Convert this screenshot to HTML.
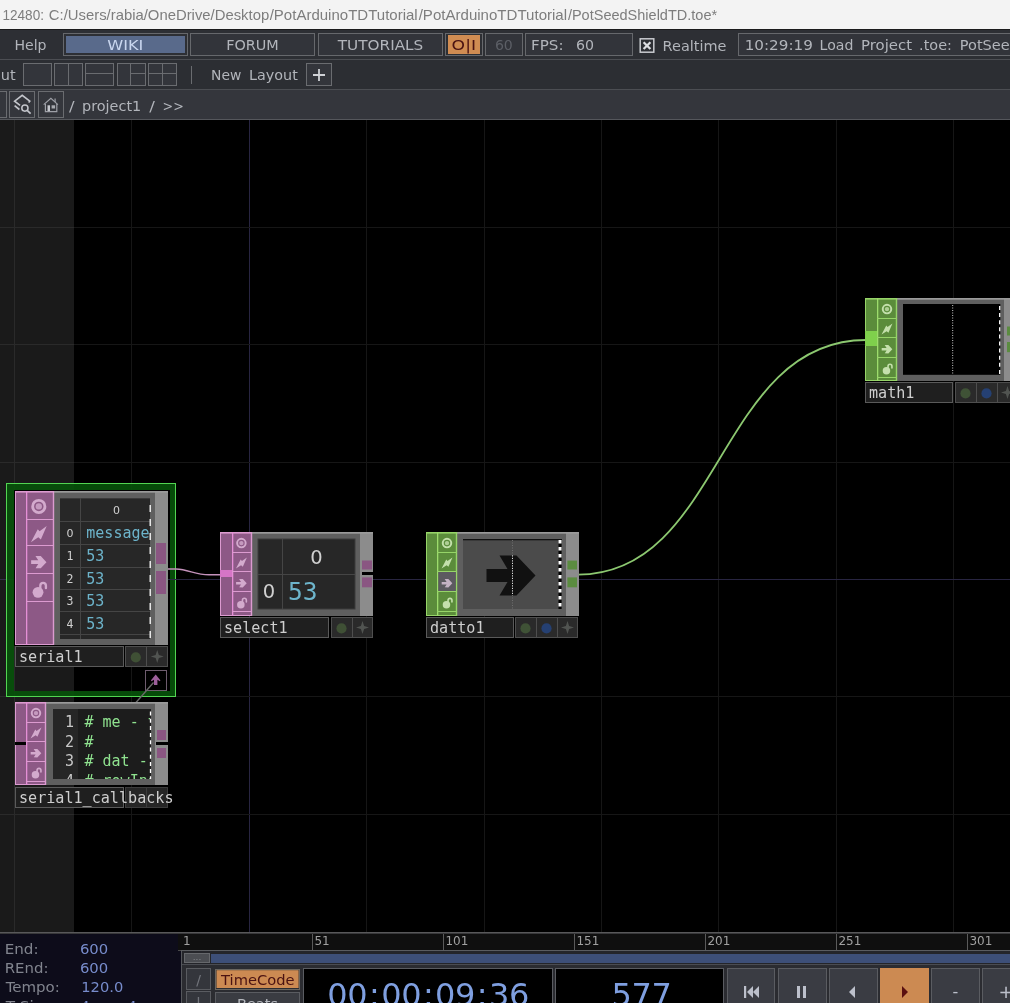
<!DOCTYPE html>
<html lang="en">
<head>
<meta charset="utf-8">
<title>TouchDesigner - PotSeedShieldTD.toe</title>
<style>
html,body{margin:0;padding:0;background:#000;overflow:hidden;}
svg{display:block;will-change:transform;}
text{white-space:pre;}
.u{font-family:"DejaVu Sans", "Liberation Sans", sans-serif;}
.m{font-family:"DejaVu Sans Mono", "Liberation Mono", monospace;}
.t{font-family:"Liberation Sans", sans-serif;}
</style>
</head>
<body>
<svg width="1010" height="1003" viewBox="0 0 1010 1003">
<rect x="0" y="120" width="1010" height="813" fill="#000" />
<rect x="0" y="120" width="74" height="812" fill="#1a1a1a" />
<line x1="14.5" y1="120" x2="14.5" y2="932" stroke="#2a2a2a" stroke-width="1" />
<line x1="131.5" y1="120" x2="131.5" y2="932" stroke="#161616" stroke-width="1" />
<line x1="249.5" y1="120" x2="249.5" y2="932" stroke="#282541" stroke-width="1" />
<line x1="366.5" y1="120" x2="366.5" y2="932" stroke="#161616" stroke-width="1" />
<line x1="484.5" y1="120" x2="484.5" y2="932" stroke="#161616" stroke-width="1" />
<line x1="601.5" y1="120" x2="601.5" y2="932" stroke="#161616" stroke-width="1" />
<line x1="718.5" y1="120" x2="718.5" y2="932" stroke="#161616" stroke-width="1" />
<line x1="836.5" y1="120" x2="836.5" y2="932" stroke="#161616" stroke-width="1" />
<line x1="953.5" y1="120" x2="953.5" y2="932" stroke="#161616" stroke-width="1" />
<line x1="74" y1="227.5" x2="1010" y2="227.5" stroke="#161616" stroke-width="1" />
<line x1="0" y1="227.5" x2="74" y2="227.5" stroke="#2a2a2a" stroke-width="1" />
<line x1="74" y1="344.5" x2="1010" y2="344.5" stroke="#161616" stroke-width="1" />
<line x1="0" y1="344.5" x2="74" y2="344.5" stroke="#2a2a2a" stroke-width="1" />
<line x1="74" y1="462.5" x2="1010" y2="462.5" stroke="#161616" stroke-width="1" />
<line x1="0" y1="462.5" x2="74" y2="462.5" stroke="#2a2a2a" stroke-width="1" />
<line x1="74" y1="579.5" x2="1010" y2="579.5" stroke="#282541" stroke-width="1" />
<line x1="0" y1="579.5" x2="74" y2="579.5" stroke="#33304a" stroke-width="1" />
<line x1="74" y1="696.5" x2="1010" y2="696.5" stroke="#161616" stroke-width="1" />
<line x1="0" y1="696.5" x2="74" y2="696.5" stroke="#2a2a2a" stroke-width="1" />
<line x1="74" y1="814.5" x2="1010" y2="814.5" stroke="#161616" stroke-width="1" />
<line x1="0" y1="814.5" x2="74" y2="814.5" stroke="#2a2a2a" stroke-width="1" />
<path fill-rule="evenodd" fill="#07530a" fill-opacity="0.9" d="M6 483 H176 V697 H6 Z M14 490 H170 V691 H14 Z"/>
<rect x="6.5" y="483.5" width="169" height="213" fill="none" stroke="#52d552" stroke-width="1" />
<rect x="14" y="490" width="156" height="156" fill="#000" />
<line x1="168" y1="579.5" x2="176" y2="579.5" stroke="#2c2a45" stroke-width="1" />
<path d="M167 569 H176 C189 569.6 195 574.8 209 574.8 H220" fill="none" stroke="#c592bc" stroke-width="1.45"/>
<path d="M578 574.6 C722 574.6 718 340 866 340" fill="none" stroke="#8cc870" stroke-width="1.8"/>
<rect x="15" y="491" width="153" height="154" fill="#5f5f5f" />
<rect x="155" y="491" width="13" height="154" fill="#8c8c8c" />
<rect x="54" y="491" width="114" height="1.7" fill="#9a9a9a" />
<rect x="15" y="491" width="39" height="154" fill="#8d5986" />
<rect x="15" y="491" width="1" height="154" fill="#dc9bd0" />
<rect x="15" y="491" width="39" height="1.6" fill="#dc9bd0" />
<rect x="15" y="644" width="39" height="1" fill="#dc9bd0" />
<rect x="26" y="491" width="1.3" height="154" fill="#e58fd6" />
<rect x="52.8" y="491" width="1.4" height="154" fill="#dc9bd0" />
<rect x="26" y="519" width="27" height="1" fill="#dc9bd0" />
<rect x="26" y="545" width="27" height="1" fill="#dc9bd0" />
<rect x="26" y="573" width="27" height="1" fill="#dc9bd0" />
<rect x="26" y="601" width="27" height="1" fill="#dc9bd0" />
<circle cx="38.8" cy="506.429" r="6.14" fill="none" stroke="#d3aacd" stroke-width="2.81"/>
<circle cx="38.8" cy="506.429" r="3.15" fill="#d3aacd" fill-opacity="0.8"/>
<polygon points="30.92,542.17 37.77,529.20 39.58,531.30 46.70,526.01 40.84,539.39 38.32,537.16" fill="#d3aacd" />
<polygon points="31.13,560.28 38.25,560.28 35.44,556.11 40.76,556.00 46.47,562.21 40.76,568.26 35.58,568.17 38.25,564.07 31.13,564.07" fill="#d3aacd" />
<circle cx="38.01" cy="592.34" r="5.41" fill="#d3aacd"/>
<path d="M40.31 588.05 V585.59 A2.81 2.81 0 0 1 45.92 585.59 V588.19" fill="none" stroke="#d3aacd" stroke-width="2.33" stroke-linecap="round"/>
<rect x="156" y="543" width="10" height="21" fill="#8a5682" />
<rect x="156" y="571" width="10" height="23" fill="#8a5682" />
<rect x="60" y="498" width="90" height="141" fill="#272727" />
<rect x="60" y="498" width="90" height="1" fill="#3a3a3a" />
<rect x="60" y="521" width="90" height="1" fill="#454545" />
<rect x="60" y="544" width="90" height="1" fill="#454545" />
<rect x="60" y="567" width="90" height="1" fill="#454545" />
<rect x="60" y="589" width="90" height="1" fill="#454545" />
<rect x="60" y="611" width="90" height="1" fill="#454545" />
<rect x="60" y="634" width="90" height="1" fill="#454545" />
<rect x="80" y="498" width="1" height="141" fill="#454545" />
<text class="u" x="116.5" y="514" font-size="11" fill="#d0d0d0" text-anchor="middle" >0</text>
<clipPath id="c1"><rect x="60" y="498" width="89.5" height="141"/></clipPath>
<g clip-path="url(#c1)">
<text class="u" x="70" y="536.8" font-size="11" fill="#d0d0d0" text-anchor="middle" >0</text>
<text class="m" x="86.3" y="537.8" font-size="15" fill="#6db4cb" text-anchor="start" >message</text>
<text class="m" x="70" y="560" font-size="11.5" fill="#d0d0d0" text-anchor="middle" >1</text>
<text class="m" x="86.3" y="561" font-size="15" fill="#6db4cb" text-anchor="start" >53</text>
<text class="m" x="70" y="582.6" font-size="11.5" fill="#d0d0d0" text-anchor="middle" >2</text>
<text class="m" x="86.3" y="583.6" font-size="15" fill="#6db4cb" text-anchor="start" >53</text>
<text class="m" x="70" y="605" font-size="11.5" fill="#d0d0d0" text-anchor="middle" >3</text>
<text class="m" x="86.3" y="606" font-size="15" fill="#6db4cb" text-anchor="start" >53</text>
<text class="m" x="70" y="627.6" font-size="11.5" fill="#d0d0d0" text-anchor="middle" >4</text>
<text class="m" x="86.3" y="628.6" font-size="15" fill="#6db4cb" text-anchor="start" >53</text>
</g>
<line x1="150.2" y1="505" x2="150.2" y2="639" stroke="#fff" stroke-width="1.3" stroke-dasharray="7 7" stroke-dashoffset="0"/>
<rect x="15.5" y="646.5" width="108" height="20" fill="#1f1f1f" stroke="#5a5a5a" stroke-width="1" />
<rect x="125.5" y="646.5" width="42" height="20" fill="#2a2a2a" stroke="#4e4e4e" stroke-width="1" />
<rect x="146" y="646" width="1" height="21" fill="#4e4e4e" />
<circle cx="135.8" cy="657.4" r="5.1" fill="#3f5035"/>
<polygon points="157.25,650.00 158.85,654.90 163.75,656.50 158.85,658.10 157.25,663.00 155.65,658.10 150.75,656.50 155.65,654.90" fill="#515451" />
<text class="m" x="19" y="662" font-size="15.1" fill="#cecece" text-anchor="start" >serial1</text>
<rect x="145.5" y="670.5" width="21" height="20" fill="#000" stroke="#6e5c6e" stroke-width="1" />
<polygon points="155.70,674.40 160.40,680.20 159.90,681.20 157.40,679.80 157.40,685.00 154.00,685.00 154.00,679.80 151.50,681.20 151.00,680.20" fill="#9d5f9b" />
<path d="M153.5 682.5 L136 702.5" fill="none" stroke="#6a6a6a" stroke-width="1.3"/>
<rect x="15" y="702" width="153" height="83" fill="#5f5f5f" />
<rect x="155" y="702" width="13" height="83" fill="#8c8c8c" />
<rect x="46" y="702" width="122" height="1.7" fill="#9a9a9a" />
<rect x="15" y="702" width="31" height="83" fill="#8d5986" />
<rect x="15" y="702" width="1" height="83" fill="#dc9bd0" />
<rect x="15" y="702" width="31" height="1.6" fill="#dc9bd0" />
<rect x="15" y="784" width="31" height="1" fill="#dc9bd0" />
<rect x="26" y="702" width="1.3" height="83" fill="#e58fd6" />
<rect x="44.8" y="702" width="1.4" height="83" fill="#dc9bd0" />
<rect x="26" y="722" width="19" height="1" fill="#dc9bd0" />
<rect x="26" y="741" width="19" height="1" fill="#dc9bd0" />
<rect x="26" y="761" width="19" height="1" fill="#dc9bd0" />
<rect x="26" y="781" width="19" height="1" fill="#dc9bd0" />
<circle cx="36.0" cy="713.1" r="4.26" fill="none" stroke="#d3aacd" stroke-width="1.95"/>
<circle cx="36.0" cy="713.1" r="2.18" fill="#d3aacd" fill-opacity="0.8"/>
<polygon points="30.54,738.61 35.29,729.61 36.54,731.06 41.48,727.39 37.42,736.68 35.67,735.13" fill="#d3aacd" />
<polygon points="30.68,751.89 35.62,751.89 33.67,749.00 37.36,748.93 41.32,753.23 37.36,757.43 33.77,757.36 35.62,754.52 30.68,754.52" fill="#d3aacd" />
<circle cx="35.45" cy="774.85" r="3.75" fill="#d3aacd"/>
<path d="M37.05 771.88 V770.16 A1.95 1.95 0 0 1 40.94 770.16 V771.97" fill="none" stroke="#d3aacd" stroke-width="1.61" stroke-linecap="round"/>
<rect x="15" y="742" width="11" height="3" fill="#000" />
<rect x="156" y="742" width="12" height="3" fill="#000" />
<rect x="157" y="730" width="9" height="10" fill="#8a5682" />
<rect x="157" y="748" width="9" height="10" fill="#8a5682" />
<rect x="53" y="709" width="98" height="70" fill="#1c1c1c" />
<rect x="53" y="709" width="25" height="70" fill="#262626" />
<clipPath id="c2"><rect x="53" y="709" width="97" height="70"/></clipPath>
<g clip-path="url(#c2)">
<text class="m" x="74" y="727.2" font-size="15" fill="#c8c8c8" text-anchor="end" >1</text>
<text class="m" x="84.5" y="727.2" font-size="15" fill="#8fe28f" text-anchor="start" ># me - t</text>
<text class="m" x="74" y="746.7" font-size="15" fill="#c8c8c8" text-anchor="end" >2</text>
<text class="m" x="84.5" y="746.7" font-size="15" fill="#8fe28f" text-anchor="start" >#</text>
<text class="m" x="74" y="766" font-size="15" fill="#c8c8c8" text-anchor="end" >3</text>
<text class="m" x="84.5" y="766" font-size="15" fill="#8fe28f" text-anchor="start" ># dat - </text>
<text class="m" x="74" y="785.5" font-size="15" fill="#c8c8c8" text-anchor="end" >4</text>
<text class="m" x="84.5" y="785.5" font-size="15" fill="#8fe28f" text-anchor="start" ># rowInd</text>
</g>
<line x1="150.5" y1="711.5" x2="150.5" y2="779" stroke="#fff" stroke-width="1.3" stroke-dasharray="4 3.2" stroke-dashoffset="0"/>
<rect x="15.5" y="787.5" width="108" height="20" fill="#1f1f1f" stroke="#5a5a5a" stroke-width="1" />
<rect x="125.5" y="787.5" width="42" height="20" fill="#262626" stroke="#3c3c3c" stroke-width="1" />
<rect x="146" y="787" width="1" height="21" fill="#3c3c3c" />
<text class="m" x="19" y="803" font-size="15.1" fill="#cecece" text-anchor="start" >serial1_callbacks</text>
<rect x="220" y="532" width="153" height="84" fill="#5f5f5f" />
<rect x="360" y="532" width="13" height="84" fill="#8c8c8c" />
<rect x="252" y="532" width="121" height="1.7" fill="#9a9a9a" />
<rect x="220" y="532" width="32" height="84" fill="#8d5986" />
<rect x="220" y="532" width="1" height="84" fill="#dc9bd0" />
<rect x="220" y="532" width="32" height="1.6" fill="#dc9bd0" />
<rect x="220" y="615" width="32" height="1" fill="#dc9bd0" />
<rect x="232" y="532" width="1.3" height="84" fill="#e58fd6" />
<rect x="250.8" y="532" width="1.4" height="84" fill="#dc9bd0" />
<rect x="232" y="552" width="19" height="1" fill="#dc9bd0" />
<rect x="232" y="571" width="19" height="1" fill="#dc9bd0" />
<rect x="232" y="591" width="19" height="1" fill="#dc9bd0" />
<rect x="232" y="611" width="19" height="1" fill="#dc9bd0" />
<circle cx="241.4" cy="543.1" r="4.26" fill="none" stroke="#d3aacd" stroke-width="1.95"/>
<circle cx="241.4" cy="543.1" r="2.18" fill="#d3aacd" fill-opacity="0.8"/>
<polygon points="235.94,568.61 240.69,559.61 241.94,561.06 246.88,557.39 242.82,566.68 241.07,565.13" fill="#d3aacd" />
<polygon points="236.08,581.89 241.02,581.89 239.07,579.00 242.76,578.93 246.72,583.23 242.76,587.43 239.17,587.36 241.02,584.52 236.08,584.52" fill="#d3aacd" />
<circle cx="240.85" cy="604.85" r="3.75" fill="#d3aacd"/>
<path d="M242.44 601.88 V600.16 A1.95 1.95 0 0 1 246.34 600.16 V601.97" fill="none" stroke="#d3aacd" stroke-width="1.61" stroke-linecap="round"/>
<rect x="220" y="570" width="12" height="7" fill="#d675c6" />
<rect x="362" y="560.5" width="10" height="9.0" fill="#8a5682" />
<rect x="362" y="577.4" width="10" height="9.899999999999977" fill="#8a5682" />
<rect x="362" y="572" width="11" height="3" fill="#000" />
<rect x="258" y="539" width="97" height="70" fill="#272727" stroke="#3c3c3c" stroke-width="1" />
<rect x="282" y="539" width="1" height="70" fill="#454545" />
<rect x="258" y="574" width="97" height="1" fill="#454545" />
<text class="u" x="316.5" y="564" font-size="19.5" fill="#d0d0d0" text-anchor="middle" >0</text>
<text class="u" x="269" y="598" font-size="19.5" fill="#d0d0d0" text-anchor="middle" >0</text>
<text class="m" x="288" y="599.5" font-size="24.5" fill="#6db4cb" text-anchor="start" >53</text>
<rect x="220.5" y="617.5" width="108" height="20" fill="#1f1f1f" stroke="#5a5a5a" stroke-width="1" />
<rect x="331.5" y="617.5" width="41" height="20" fill="#2a2a2a" stroke="#4e4e4e" stroke-width="1" />
<rect x="352" y="617" width="1" height="21" fill="#4e4e4e" />
<circle cx="341.5" cy="628.4" r="5.1" fill="#3f5035"/>
<polygon points="362.50,621.00 364.10,625.90 369.00,627.50 364.10,629.10 362.50,634.00 360.90,629.10 356.00,627.50 360.90,625.90" fill="#515451" />
<text class="m" x="224" y="633" font-size="15.1" fill="#cecece" text-anchor="start" >select1</text>
<rect x="426" y="532" width="153" height="84" fill="#5f5f5f" />
<rect x="566" y="532" width="13" height="84" fill="#8c8c8c" />
<rect x="457" y="532" width="122" height="1.7" fill="#9a9a9a" />
<rect x="426" y="532" width="31" height="84" fill="#5b8c3b" />
<rect x="426" y="532" width="1" height="84" fill="#96d468" />
<rect x="426" y="532" width="31" height="1.6" fill="#96d468" />
<rect x="426" y="615" width="31" height="1" fill="#96d468" />
<rect x="437" y="532" width="1.3" height="84" fill="#9ddc6c" />
<rect x="455.8" y="532" width="1.4" height="84" fill="#96d468" />
<rect x="437" y="552" width="19" height="1" fill="#96d468" />
<rect x="437" y="571" width="19" height="1" fill="#96d468" />
<rect x="437" y="591" width="19" height="1" fill="#96d468" />
<rect x="437" y="611" width="19" height="1" fill="#96d468" />
<circle cx="447.0" cy="543.1" r="4.26" fill="none" stroke="#c4e0ac" stroke-width="1.95"/>
<circle cx="447.0" cy="543.1" r="2.18" fill="#c4e0ac" fill-opacity="0.8"/>
<polygon points="441.54,568.61 446.29,559.61 447.54,561.06 452.48,557.39 448.42,566.68 446.67,565.13" fill="#c4e0ac" />
<rect x="438.3" y="572" width="17.5" height="19" fill="#5c5a60" />
<polygon points="441.68,581.89 446.62,581.89 444.67,579.00 448.36,578.93 452.32,583.23 448.36,587.43 444.77,587.36 446.62,584.52 441.68,584.52" fill="#c4b2c4" />
<circle cx="446.45" cy="604.85" r="3.75" fill="#c4e0ac"/>
<path d="M448.05 601.88 V600.16 A1.95 1.95 0 0 1 451.94 600.16 V601.97" fill="none" stroke="#c4e0ac" stroke-width="1.61" stroke-linecap="round"/>
<rect x="567.4" y="560.6" width="9.6" height="8.899999999999977" fill="#5b8c40" />
<rect x="567.4" y="577.4" width="9.6" height="9.899999999999977" fill="#5b8c40" />
<rect x="463" y="539" width="99" height="70" fill="#4b4b4b" />
<rect x="463" y="539" width="99" height="1.3" fill="#111" />
<polygon points="486.50,569.00 507.50,569.00 499.50,555.50 516.50,555.50 535.50,575.50 516.50,595.50 499.50,595.50 507.50,582.00 486.50,582.00" fill="#111" />
<line x1="512.5" y1="540" x2="512.5" y2="609" stroke="#6e6e6e" stroke-width="1" stroke-dasharray="1 1.5" stroke-dashoffset="0"/>
<line x1="512.5" y1="555.5" x2="512.5" y2="595.5" stroke="#e0e0e0" stroke-width="1" stroke-dasharray="1 1.5" stroke-dashoffset="0"/>
<rect x="558.5" y="540" width="3" height="69" fill="#000" />
<line x1="560" y1="540" x2="560" y2="609" stroke="#fff" stroke-width="3" stroke-dasharray="3.5 3.5" stroke-dashoffset="0"/>
<rect x="426.5" y="617.5" width="87" height="20" fill="#1f1f1f" stroke="#5a5a5a" stroke-width="1" />
<rect x="515.5" y="617.5" width="62" height="20" fill="#2a2a2a" stroke="#4e4e4e" stroke-width="1" />
<rect x="536" y="617" width="1" height="21" fill="#4e4e4e" />
<rect x="557" y="617" width="1" height="21" fill="#4e4e4e" />
<circle cx="525.5" cy="628.4" r="5.1" fill="#3f5236"/>
<circle cx="546.5" cy="628.4" r="5.1" fill="#254072"/>
<polygon points="567.50,621.00 569.10,625.90 574.00,627.50 569.10,629.10 567.50,634.00 565.90,629.10 561.00,627.50 565.90,625.90" fill="#515451" />
<text class="m" x="430" y="633" font-size="15.1" fill="#cecece" text-anchor="start" >datto1</text>
<rect x="865" y="298" width="153" height="83" fill="#5f5f5f" />
<rect x="1004" y="298" width="14" height="83" fill="#8c8c8c" />
<rect x="897" y="298" width="121" height="1.7" fill="#9a9a9a" />
<rect x="865" y="298" width="32" height="83" fill="#5b8c3b" />
<rect x="865" y="298" width="1" height="83" fill="#96d468" />
<rect x="865" y="298" width="32" height="1.6" fill="#96d468" />
<rect x="865" y="380" width="32" height="1" fill="#96d468" />
<rect x="877" y="298" width="1.3" height="83" fill="#9ddc6c" />
<rect x="895.8" y="298" width="1.4" height="83" fill="#96d468" />
<rect x="877" y="318" width="19" height="1" fill="#96d468" />
<rect x="877" y="337" width="19" height="1" fill="#96d468" />
<rect x="877" y="357" width="19" height="1" fill="#96d468" />
<rect x="877" y="377" width="19" height="1" fill="#96d468" />
<circle cx="887.0" cy="309.1" r="4.26" fill="none" stroke="#c4e0ac" stroke-width="1.95"/>
<circle cx="887.0" cy="309.1" r="2.18" fill="#c4e0ac" fill-opacity="0.8"/>
<polygon points="881.54,334.61 886.29,325.61 887.54,327.06 892.48,323.39 888.42,332.68 886.67,331.13" fill="#c4e0ac" />
<polygon points="881.68,347.89 886.62,347.89 884.67,345.00 888.36,344.93 892.32,349.23 888.36,353.43 884.77,353.36 886.62,350.52 881.68,350.52" fill="#c4e0ac" />
<circle cx="886.45" cy="370.85" r="3.75" fill="#c4e0ac"/>
<path d="M888.04 367.88 V366.17 A1.95 1.95 0 0 1 891.94 366.17 V367.97" fill="none" stroke="#c4e0ac" stroke-width="1.61" stroke-linecap="round"/>
<rect x="865" y="331" width="12" height="15" fill="#7fd04c" />
<rect x="1007" y="326.5" width="10" height="9.0" fill="#5b8c40" />
<rect x="1007" y="342" width="10" height="10.199999999999989" fill="#5b8c40" />
<rect x="903" y="304" width="97.3" height="70.8" fill="#000" />
<line x1="952.7" y1="305" x2="952.7" y2="375" stroke="#ccc" stroke-width="1" stroke-dasharray="1 1.5" stroke-dashoffset="0"/>
<line x1="999.7" y1="306" x2="999.7" y2="375" stroke="#fff" stroke-width="1.3" stroke-dasharray="4 3.1" stroke-dashoffset="0"/>
<rect x="865.5" y="382.5" width="87" height="20" fill="#1f1f1f" stroke="#5a5a5a" stroke-width="1" />
<rect x="955.5" y="382.5" width="62" height="20" fill="#2a2a2a" stroke="#4e4e4e" stroke-width="1" />
<rect x="976" y="382" width="1" height="21" fill="#4e4e4e" />
<rect x="997" y="382" width="1" height="21" fill="#4e4e4e" />
<circle cx="965.5" cy="393.4" r="5.1" fill="#3f5236"/>
<circle cx="986.5" cy="393.4" r="5.1" fill="#254072"/>
<polygon points="1007.50,386.00 1009.10,390.90 1014.00,392.50 1009.10,394.10 1007.50,399.00 1005.90,394.10 1001.00,392.50 1005.90,390.90" fill="#515451" />
<text class="m" x="869" y="398" font-size="15.1" fill="#cecece" text-anchor="start" >math1</text>
<rect x="0" y="0" width="1010" height="29" fill="#f3f3f3" />
<text class="t" x="2.5" y="20.4" font-size="14.4" fill="#7d7d7d" text-anchor="start"  textLength="41.47" lengthAdjust="spacingAndGlyphs">12480:</text>
<text class="t" x="48.8" y="20.4" font-size="14.4" fill="#7d7d7d" text-anchor="start"  textLength="220.39" lengthAdjust="spacingAndGlyphs">C:/Users/rabia/OneDrive/Desktop</text>
<text class="t" x="269.7" y="20.4" font-size="14.4" fill="#7d7d7d" text-anchor="start"  textLength="148.00" lengthAdjust="spacingAndGlyphs">/PotArduinoTDTutorial</text>
<text class="t" x="418.7" y="20.4" font-size="14.4" fill="#7d7d7d" text-anchor="start"  textLength="148.40" lengthAdjust="spacingAndGlyphs">/PotArduinoTDTutorial</text>
<text class="t" x="567.9" y="20.4" font-size="14.4" fill="#7d7d7d" text-anchor="start"  textLength="149.23" lengthAdjust="spacingAndGlyphs">/PotSeedShieldTD.toe*</text>
<rect x="0" y="29" width="1010" height="31" fill="#2d2f34" />
<rect x="0" y="29" width="1010" height="1" fill="#1a1a1c" />
<text class="u" x="14.4" y="50" font-size="14.5" fill="#b2b5bb" text-anchor="start"  textLength="32.09" lengthAdjust="spacingAndGlyphs">Help</text>
<rect x="63.5" y="33.5" width="124" height="22" fill="#2d2f34" stroke="#66686c" stroke-width="1" />
<rect x="66" y="36" width="119" height="17" fill="#596a8b" />
<text class="u" x="107.2" y="50" font-size="14.5" fill="#c9d6ee" text-anchor="start"  textLength="36.13" lengthAdjust="spacingAndGlyphs">WIKI</text>
<rect x="190.5" y="33.5" width="124" height="22" fill="#32343a" stroke="#66686c" stroke-width="1" />
<text class="u" x="226.2" y="50" font-size="14.5" fill="#b2b5bb" text-anchor="start"  textLength="52.62" lengthAdjust="spacingAndGlyphs">FORUM</text>
<rect x="318.5" y="33.5" width="124" height="22" fill="#32343a" stroke="#66686c" stroke-width="1" />
<text class="u" x="337.77" y="50" font-size="14.5" fill="#b2b5bb" text-anchor="start"  textLength="85.51" lengthAdjust="spacingAndGlyphs">TUTORIALS</text>
<rect x="445.5" y="33.5" width="37" height="22" fill="#2d2f34" stroke="#66686c" stroke-width="1" />
<rect x="448" y="35" width="32" height="19" fill="#d08c52" />
<text class="u" x="451.6" y="50" font-size="14.5" fill="#4a1212" text-anchor="start"  textLength="24.42" lengthAdjust="spacingAndGlyphs">O|I</text>
<rect x="485.5" y="33.5" width="37" height="22" fill="#32343a" stroke="#66686c" stroke-width="1" />
<text class="u" x="494.9" y="50" font-size="14.5" fill="#5c5f66" text-anchor="start"  textLength="17.91" lengthAdjust="spacingAndGlyphs">60</text>
<rect x="525.5" y="33.5" width="107" height="22" fill="#32343a" stroke="#66686c" stroke-width="1" />
<text class="u" x="531.0" y="50" font-size="14.5" fill="#b2b5bb" text-anchor="start"  textLength="32.49" lengthAdjust="spacingAndGlyphs">FPS:</text>
<text class="u" x="575.9" y="50" font-size="14.5" fill="#b2b5bb" text-anchor="start"  textLength="18.01" lengthAdjust="spacingAndGlyphs">60</text>
<rect x="640.2" y="38.8" width="13.6" height="13.4" fill="none" stroke="#c8cacf" stroke-width="1.5" />
<path d="M643.6 42.2 L650.4 49 M650.4 42.2 L643.6 49" stroke="#dcdee2" stroke-width="2.3" fill="none"/>
<text class="u" x="662.6" y="51.2" font-size="14.5" fill="#b2b5bb" text-anchor="start"  textLength="63.82" lengthAdjust="spacingAndGlyphs">Realtime</text>
<rect x="738.5" y="33.5" width="299" height="22" fill="#32343a" stroke="#66686c" stroke-width="1" />
<text class="u" x="744.7" y="50" font-size="14.5" fill="#b2b5bb" text-anchor="start"  textLength="68.20" lengthAdjust="spacingAndGlyphs">10:29:19</text>
<text class="u" x="819.6" y="50" font-size="14.5" fill="#b2b5bb" text-anchor="start"  textLength="33.77" lengthAdjust="spacingAndGlyphs">Load</text>
<text class="u" x="861.0" y="50" font-size="14.5" fill="#b2b5bb" text-anchor="start"  textLength="50.99" lengthAdjust="spacingAndGlyphs">Project</text>
<text class="u" x="919.1" y="50" font-size="14.5" fill="#b2b5bb" text-anchor="start"  textLength="32.77" lengthAdjust="spacingAndGlyphs">.toe:</text>
<text class="u" x="959.8" y="50" font-size="14.5" fill="#b2b5bb" text-anchor="start" >PotSeedShieldTD</text>
<rect x="0" y="59" width="1010" height="1" fill="#4c4e53" />
<rect x="0" y="60" width="1010" height="29" fill="#2c2e33" />
<text class="u" x="-8" y="80.2" font-size="14.5" fill="#b2b5bb" text-anchor="start" >out</text>
<rect x="23.5" y="63.5" width="28" height="22" fill="#33353b" stroke="#6a6c70" stroke-width="1" />
<rect x="54.5" y="63.5" width="28" height="22" fill="#33353b" stroke="#6a6c70" stroke-width="1" />
<rect x="85.5" y="63.5" width="28" height="22" fill="#33353b" stroke="#6a6c70" stroke-width="1" />
<rect x="117.5" y="63.5" width="28" height="22" fill="#33353b" stroke="#6a6c70" stroke-width="1" />
<rect x="148.5" y="63.5" width="28" height="22" fill="#33353b" stroke="#6a6c70" stroke-width="1" />
<line x1="68.5" y1="63" x2="68.5" y2="86" stroke="#6a6c70" stroke-width="1" />
<line x1="85" y1="73.5" x2="114" y2="73.5" stroke="#6a6c70" stroke-width="1" />
<line x1="130.5" y1="63" x2="130.5" y2="86" stroke="#6a6c70" stroke-width="1" />
<line x1="130" y1="73.5" x2="146" y2="73.5" stroke="#6a6c70" stroke-width="1" />
<line x1="162.5" y1="63" x2="162.5" y2="86" stroke="#6a6c70" stroke-width="1" />
<line x1="148" y1="73.5" x2="177" y2="73.5" stroke="#6a6c70" stroke-width="1" />
<line x1="191.5" y1="66" x2="191.5" y2="84" stroke="#6a6c70" stroke-width="1" />
<text class="u" x="211.1" y="80.2" font-size="14.5" fill="#b2b5bb" text-anchor="start"  textLength="30.30" lengthAdjust="spacingAndGlyphs">New</text>
<text class="u" x="249.0" y="80.2" font-size="14.5" fill="#b2b5bb" text-anchor="start"  textLength="48.78" lengthAdjust="spacingAndGlyphs">Layout</text>
<rect x="306.5" y="63.5" width="25" height="22" fill="#33353b" stroke="#6a6c70" stroke-width="1" />
<path d="M313 75 H325 M319 69 V81" stroke="#cfd1d6" stroke-width="1.8" fill="none"/>
<rect x="0" y="89" width="1010" height="1" fill="#4c4e53" />
<rect x="0" y="90" width="1010" height="30" fill="#34363c" />
<rect x="-9.5" y="91.5" width="16" height="26" fill="#34363c" stroke="#6a6c70" stroke-width="1" />
<rect x="9.5" y="91.5" width="25" height="26" fill="#34363c" stroke="#6a6c70" stroke-width="1" />
<rect x="38.5" y="91.5" width="25" height="26" fill="#34363c" stroke="#6a6c70" stroke-width="1" />
<g stroke="#c3c5cb" fill="none" stroke-width="1.6"><path d="M20.1 105.3 L14.6 101.2 L22.2 95.3 L29.8 101.2 L28.6 102.6"/><path d="M14.6 105.7 L19.4 109.5"/><circle cx="24.9" cy="108.1" r="3.1" stroke-width="1.5"/><path d="M27.4 110.6 L30.6 113.7" stroke-width="1.7"/></g>
<g stroke="#9ea0a7" fill="none" stroke-width="1.2"><path d="M43.7 104.6 L50.9 98.4 L57.9 104.6"/><path d="M55.1 98.6 V102"/><path d="M45.4 104 V111.6 H56.8 V104"/></g>
<rect x="47.5" y="105.3" width="2.5" height="5.8" fill="#c6c8ce" />
<rect x="51.6" y="105.3" width="3.5" height="3.2" fill="#a8aab0" />
<text class="u" x="68.9" y="110.6" font-size="14.5" fill="#b2b5bb" text-anchor="start"  textLength="5.54" lengthAdjust="spacingAndGlyphs">/</text>
<text class="u" x="82.0" y="110.6" font-size="14.5" fill="#b2b5bb" text-anchor="start"  textLength="59.29" lengthAdjust="spacingAndGlyphs">project1</text>
<text class="u" x="149.3" y="110.6" font-size="14.5" fill="#b2b5bb" text-anchor="start"  textLength="5.64" lengthAdjust="spacingAndGlyphs">/</text>
<text class="u" x="162.5" y="110.6" font-size="14.5" fill="#b2b5bb" text-anchor="start"  textLength="21.29" lengthAdjust="spacingAndGlyphs">&gt;&gt;</text>
<rect x="0" y="119" width="1010" height="1" fill="#55575c" />
<rect x="0" y="932" width="1010" height="71" fill="#2b2c31" />
<rect x="0" y="932" width="1010" height="1" fill="#58585a" />
<rect x="0" y="933" width="1010" height="1" fill="#38383a" />
<rect x="0" y="934" width="178" height="70" fill="#0d0c1a" />
<text class="u" x="4.7" y="954.2" font-size="14.5" fill="#81848e" text-anchor="start"  textLength="33.91" lengthAdjust="spacingAndGlyphs">End:</text>
<text class="u" x="79.9" y="954.2" font-size="14.5" fill="#778ccb" text-anchor="start"  textLength="28.29" lengthAdjust="spacingAndGlyphs">600</text>
<text class="u" x="4.7" y="973.0500000000001" font-size="14.5" fill="#81848e" text-anchor="start"  textLength="43.82" lengthAdjust="spacingAndGlyphs">REnd:</text>
<text class="u" x="79.9" y="973.0500000000001" font-size="14.5" fill="#778ccb" text-anchor="start"  textLength="28.29" lengthAdjust="spacingAndGlyphs">600</text>
<text class="u" x="5.66" y="991.9000000000001" font-size="14.5" fill="#81848e" text-anchor="start"  textLength="54.16" lengthAdjust="spacingAndGlyphs">Tempo:</text>
<text class="u" x="81.3" y="991.9000000000001" font-size="14.5" fill="#778ccb" text-anchor="start"  textLength="41.91" lengthAdjust="spacingAndGlyphs">120.0</text>
<text class="u" x="5.67" y="1010.75" font-size="14.5" fill="#81848e" text-anchor="start"  textLength="42.81" lengthAdjust="spacingAndGlyphs">T Sig:</text>
<text class="u" x="81.0" y="1010.75" font-size="14.5" fill="#778ccb" text-anchor="start"  textLength="8.48" lengthAdjust="spacingAndGlyphs">4</text>
<text class="u" x="128.0" y="1010.75" font-size="14.5" fill="#778ccb" text-anchor="start"  textLength="8.48" lengthAdjust="spacingAndGlyphs">4</text>
<rect x="178" y="934" width="832" height="16" fill="#0f0f0f" />
<text class="u" x="183.0" y="945.3" font-size="12" fill="#a0a0a0" text-anchor="start" >1</text>
<rect x="312" y="934" width="1" height="16" fill="#5a5a5a" />
<text class="u" x="314.4" y="945.3" font-size="12" fill="#a0a0a0" text-anchor="start" >51</text>
<rect x="443" y="934" width="1" height="16" fill="#5a5a5a" />
<text class="u" x="445.4" y="945.3" font-size="12" fill="#a0a0a0" text-anchor="start" >101</text>
<rect x="574" y="934" width="1" height="16" fill="#5a5a5a" />
<text class="u" x="576.4" y="945.3" font-size="12" fill="#a0a0a0" text-anchor="start" >151</text>
<rect x="705" y="934" width="1" height="16" fill="#5a5a5a" />
<text class="u" x="707.4" y="945.3" font-size="12" fill="#a0a0a0" text-anchor="start" >201</text>
<rect x="836" y="934" width="1" height="16" fill="#5a5a5a" />
<text class="u" x="838.4" y="945.3" font-size="12" fill="#a0a0a0" text-anchor="start" >251</text>
<rect x="967" y="934" width="1" height="16" fill="#5a5a5a" />
<text class="u" x="969.4" y="945.3" font-size="12" fill="#a0a0a0" text-anchor="start" >301</text>
<rect x="178" y="950" width="832" height="1" fill="#4a4a4a" />
<rect x="178" y="951" width="3" height="60" fill="#0d0c1a" />
<rect x="181" y="951" width="829" height="13" fill="#24252a" />
<rect x="181" y="950" width="829" height="1" fill="#5a5c60" />
<rect x="181" y="951" width="1" height="60" fill="#55575c" />
<rect x="211" y="954" width="799" height="9" fill="#3d4f78" />
<rect x="184.5" y="953.5" width="25" height="9" fill="#4b4d52" stroke="#66686c" stroke-width="1" />
<text class="u" x="197" y="959.5" font-size="9" fill="#85878c" text-anchor="middle" >...</text>
<rect x="182" y="964" width="828" height="1" fill="#4a4c52" />
<rect x="186.5" y="968.5" width="24" height="21" fill="#34363c" stroke="#5a5c61" stroke-width="1" />
<text class="u" x="198.5" y="985" font-size="14" fill="#72757c" text-anchor="middle" >/</text>
<rect x="186.5" y="991.5" width="24" height="21" fill="#34363c" stroke="#5a5c61" stroke-width="1" />
<text class="t" x="198.5" y="1007" font-size="14" fill="#72757c" text-anchor="middle" >I</text>
<rect x="215.5" y="969.5" width="84" height="20" fill="#2b2c31" stroke="#6a6660" stroke-width="1" />
<rect x="216.5" y="970.2" width="82.1" height="17.8" fill="#cc8a52" />
<text class="u" x="221.06" y="984.5" font-size="14.5" fill="#4a1212" text-anchor="start"  textLength="73.52" lengthAdjust="spacingAndGlyphs">TimeCode</text>
<rect x="215.5" y="992.5" width="84" height="22" fill="#3a3c42" stroke="#5a5c61" stroke-width="1" />
<text class="u" x="257.5" y="1009" font-size="14.5" fill="#b4b7bd" text-anchor="middle" >Beats</text>
<rect x="303.5" y="968.5" width="249" height="39" fill="#000" stroke="#5a5c61" stroke-width="1" />
<text class="u" x="327.3 347.3 369.0 381.2 401.2 422.9 435.1 455.1 476.8 489.0 509.0" y="1006" font-size="32" fill="#7f9fe0" text-anchor="start" >00:00:09:36</text>
<rect x="555.5" y="968.5" width="168" height="39" fill="#000" stroke="#5a5c61" stroke-width="1" />
<text class="u" x="611.4 631.4 651.4" y="1006" font-size="32" fill="#7f9fe0" text-anchor="start" >577</text>
<rect x="727.5" y="968.5" width="47" height="39" fill="#3a3c43" stroke="#5a5c61" stroke-width="1" />
<rect x="778.5" y="968.5" width="48" height="39" fill="#3a3c43" stroke="#5a5c61" stroke-width="1" />
<rect x="829.5" y="968.5" width="48" height="39" fill="#3a3c43" stroke="#5a5c61" stroke-width="1" />
<rect x="880.5" y="968.5" width="48" height="39" fill="#cc8a52" stroke="#cc8a52" stroke-width="1" />
<rect x="931.5" y="968.5" width="48" height="39" fill="#3a3c43" stroke="#5a5c61" stroke-width="1" />
<rect x="982.5" y="968.5" width="48" height="39" fill="#3a3c43" stroke="#5a5c61" stroke-width="1" />
<rect x="744" y="986" width="2.2" height="12" fill="#bcc0cb" />
<polygon points="747.00,992.00 753.00,986.00 753.00,998.00" fill="#bcc0cb" />
<polygon points="753.00,992.00 759.00,986.00 759.00,998.00" fill="#bcc0cb" />
<rect x="797" y="986" width="3" height="12" fill="#bcc0cb" />
<rect x="803" y="986" width="3" height="12" fill="#bcc0cb" />
<polygon points="849.00,992.00 855.00,986.00 855.00,998.00" fill="#bcc0cb" />
<polygon points="908.00,992.00 902.00,986.00 902.00,998.00" fill="#5a1010" />
<text class="u" x="955.5" y="997" font-size="16" fill="#bcc0cb" text-anchor="middle" >-</text>
<text class="u" x="1006" y="998" font-size="18" fill="#bcc0cb" text-anchor="middle" >+</text>
</svg>
</body>
</html>
